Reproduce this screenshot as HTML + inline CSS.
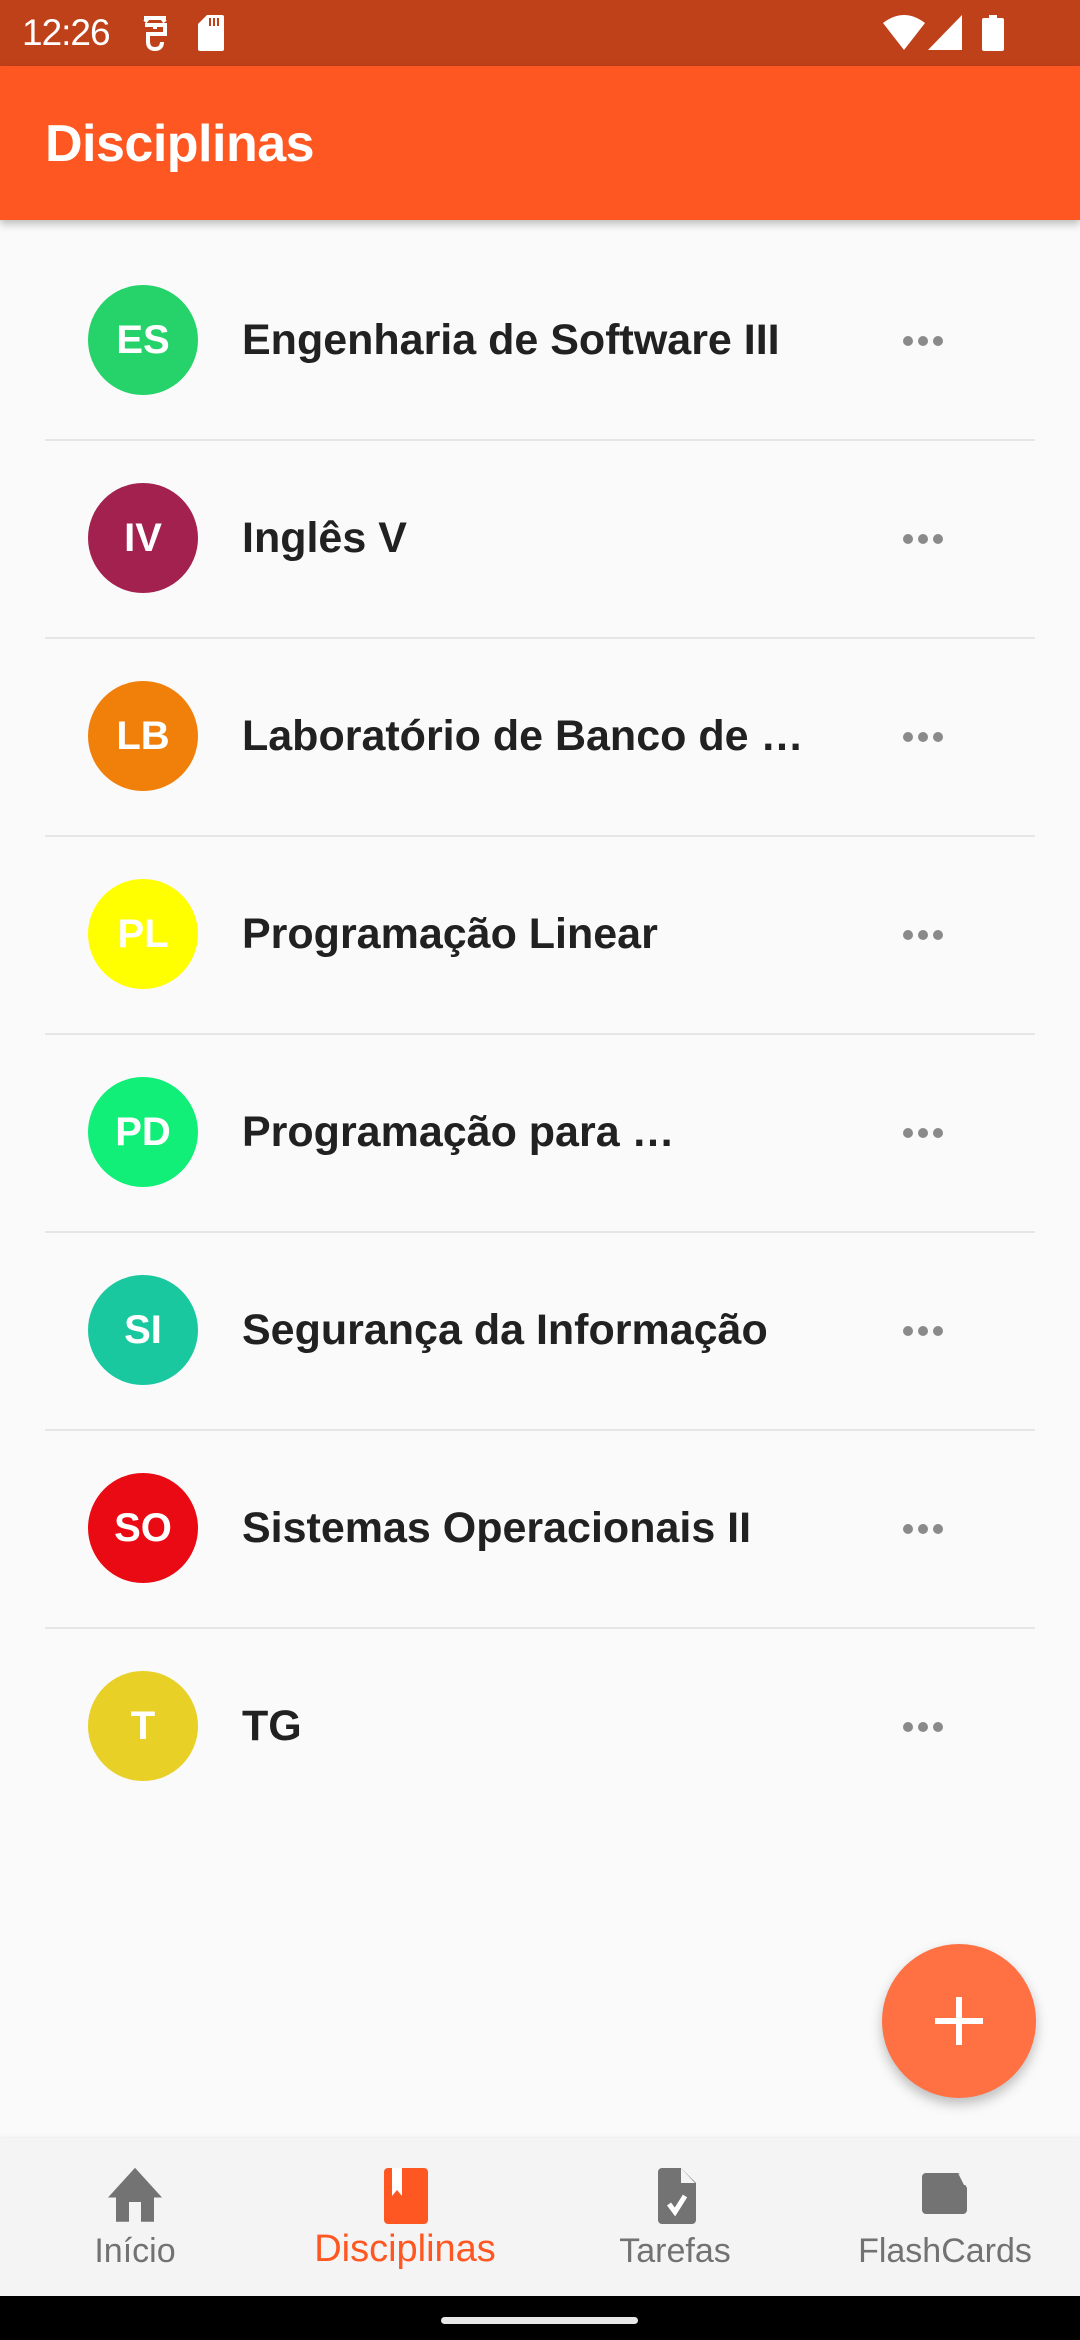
<!DOCTYPE html>
<html><head><meta charset="utf-8"><style>
*{margin:0;padding:0;box-sizing:border-box}
body{width:1080px;height:2340px;background:#FAFAFA;font-family:"Liberation Sans",sans-serif;position:relative;overflow:hidden}
.sb{position:absolute;left:0;top:0;width:1080px;height:66px;background:#BF411A;color:#fff}
.ab{position:absolute;left:0;top:66px;width:1080px;height:154px;background:#FF5722;box-shadow:0 4px 8px rgba(0,0,0,.25)}
.ab h1{position:absolute;left:45px;top:48px;font-size:52px;font-weight:bold;color:#fff;letter-spacing:-.5px}
.row{position:absolute;left:0;width:1080px;height:198px}
.av{position:absolute;left:88px;top:44px;width:110px;height:110px;border-radius:50%;color:#fff;font-weight:bold;font-size:40px;text-align:center;line-height:110px}
.tx{position:absolute;left:242px;top:0;line-height:198px;font-size:43px;font-weight:bold;color:#212121}
.dots{position:absolute;left:903px;top:92px}
.dots i{display:inline-block;width:10px;height:10px;border-radius:50%;background:#8a8a8a;margin-right:5px}
.div{position:absolute;left:45px;width:990px;height:2px;background:#E6E6E6}
.fab{position:absolute;left:882px;top:1944px;width:154px;height:154px;border-radius:50%;background:#FF7043;box-shadow:0 6px 12px rgba(0,0,0,.25)}
.nav{position:absolute;left:0;top:2138px;width:1080px;height:158px;background:#F4F4F4;box-shadow:0 -1px 3px rgba(0,0,0,.06)}
.ni{position:absolute;top:0;width:270px;text-align:center}
.ni svg{position:absolute;left:100px;top:30px}
.ni span{position:absolute;left:0;width:270px;top:94px;font-size:34px;color:#727272}
.blk{position:absolute;left:0;top:2296px;width:1080px;height:44px;background:#000}
</style></head><body>
<div class="sb">
<div style="position:absolute;left:22px;top:12px;font-size:37px;letter-spacing:-1px">12:26</div>
<svg style="position:absolute;left:140px;top:15px" width="30" height="36" viewBox="0 0 30 36"><path d="M4 3h22M8 3l-3 4M22 3l3 4M15 8v6M5 10h20v9H8v8c0 5 3 7 7 7s7-2 7-7" fill="none" stroke="#fff" stroke-width="4"/></svg>
<svg style="position:absolute;left:198px;top:15px" width="26" height="36" viewBox="0 0 26 36"><path d="M9 0h15a2 2 0 0 1 2 2v32a2 2 0 0 1-2 2H2a2 2 0 0 1-2-2V9z" fill="#fff"/><path d="M12 3v8M16 3v8M20 3v8" stroke="#BF411A" stroke-width="2"/></svg>
<svg style="position:absolute;left:883px;top:15px" width="42" height="35" viewBox="0 0 42 35"><path d="M0 8Q21-8 42 8L21 35z" fill="#fff"/></svg>
<svg style="position:absolute;left:928px;top:15px" width="34" height="35"><path d="M0 35L34 0V35z" fill="#fff"/></svg>
<svg style="position:absolute;left:982px;top:15px" width="22" height="36"><path d="M7 0h8v3h5a2 2 0 0 1 2 2v29a2 2 0 0 1-2 2H2a2 2 0 0 1-2-2V5a2 2 0 0 1 2-2h5z" fill="#fff"/></svg>
</div>
<div class="ab"><h1>Disciplinas</h1></div>

<div class="row" style="top:241px"><div class="av" style="background:#26D36A">ES</div><div class="tx">Engenharia de Software III</div><div class="dots"><i></i><i></i><i></i></div></div>
<div class="div" style="top:439px"></div>
<div class="row" style="top:439px"><div class="av" style="background:#A3214F">IV</div><div class="tx">Inglês V</div><div class="dots"><i></i><i></i><i></i></div></div>
<div class="div" style="top:637px"></div>
<div class="row" style="top:637px"><div class="av" style="background:#F0800A">LB</div><div class="tx">Laboratório de Banco de …</div><div class="dots"><i></i><i></i><i></i></div></div>
<div class="div" style="top:835px"></div>
<div class="row" style="top:835px"><div class="av" style="background:#FFFF00">PL</div><div class="tx">Programação Linear</div><div class="dots"><i></i><i></i><i></i></div></div>
<div class="div" style="top:1033px"></div>
<div class="row" style="top:1033px"><div class="av" style="background:#12EF78">PD</div><div class="tx">Programação para …</div><div class="dots"><i></i><i></i><i></i></div></div>
<div class="div" style="top:1231px"></div>
<div class="row" style="top:1231px"><div class="av" style="background:#1AC8A0">SI</div><div class="tx">Segurança da Informação</div><div class="dots"><i></i><i></i><i></i></div></div>
<div class="div" style="top:1429px"></div>
<div class="row" style="top:1429px"><div class="av" style="background:#EA0A14">SO</div><div class="tx">Sistemas Operacionais II</div><div class="dots"><i></i><i></i><i></i></div></div>
<div class="div" style="top:1627px"></div>
<div class="row" style="top:1627px"><div class="av" style="background:#E8D027">T</div><div class="tx">TG</div><div class="dots"><i></i><i></i><i></i></div></div>

<div class="fab"><svg style="position:absolute;left:53px;top:53px" width="48" height="48"><path d="M24 0v48M0 24h48" stroke="#fff" stroke-width="6"/></svg></div>

<div class="nav">
<div class="ni" style="left:0"><svg width="70" height="60" viewBox="0 0 70 60"><path d="M35 2L8 35h8v27h13V40h12v22h13V35h8z" fill="#737373" transform="translate(0,-2) scale(1,0.9)"/></svg><span>Início</span></div>
<div class="ni" style="left:270px"><svg width="70" height="60" viewBox="0 0 70 60" style="top:30px"><rect x="14" y="0" width="44" height="56" rx="4" fill="#FF5722"/><path d="M22 0v28l5-6 5 6V0" fill="#fff"/></svg><span style="color:#FF5722;font-size:38px;top:90px">Disciplinas</span></div>
<div class="ni" style="left:540px"><svg width="70" height="60" viewBox="0 0 70 60"><path d="M6 4a4 4 0 0 1 4-4h19l15 15v37a4 4 0 0 1-4 4H10a4 4 0 0 1-4-4z" fill="#737373" transform="translate(12,0)"/><path d="M41 0v15h14" fill="#f4f4f4"/><path d="M29 36l6 8 10-16" fill="none" stroke="#fff" stroke-width="5"/></svg><span>Tarefas</span></div>
<div class="ni" style="left:810px"><svg width="70" height="60" viewBox="0 0 70 60"><path d="M16 9a4 4 0 0 1 4-4h33l8 15v22a4 4 0 0 1-4 4H20a4 4 0 0 1-4-4z" fill="#737373" transform="translate(-4,0)"/><path d="M48 5l6 12h8" fill="#f4f4f4"/></svg><span>FlashCards</span></div>
</div>
<div class="blk"><div style="position:absolute;left:441px;top:21px;width:197px;height:7px;border-radius:4px;background:#e8e8e8"></div></div>
</body></html>
